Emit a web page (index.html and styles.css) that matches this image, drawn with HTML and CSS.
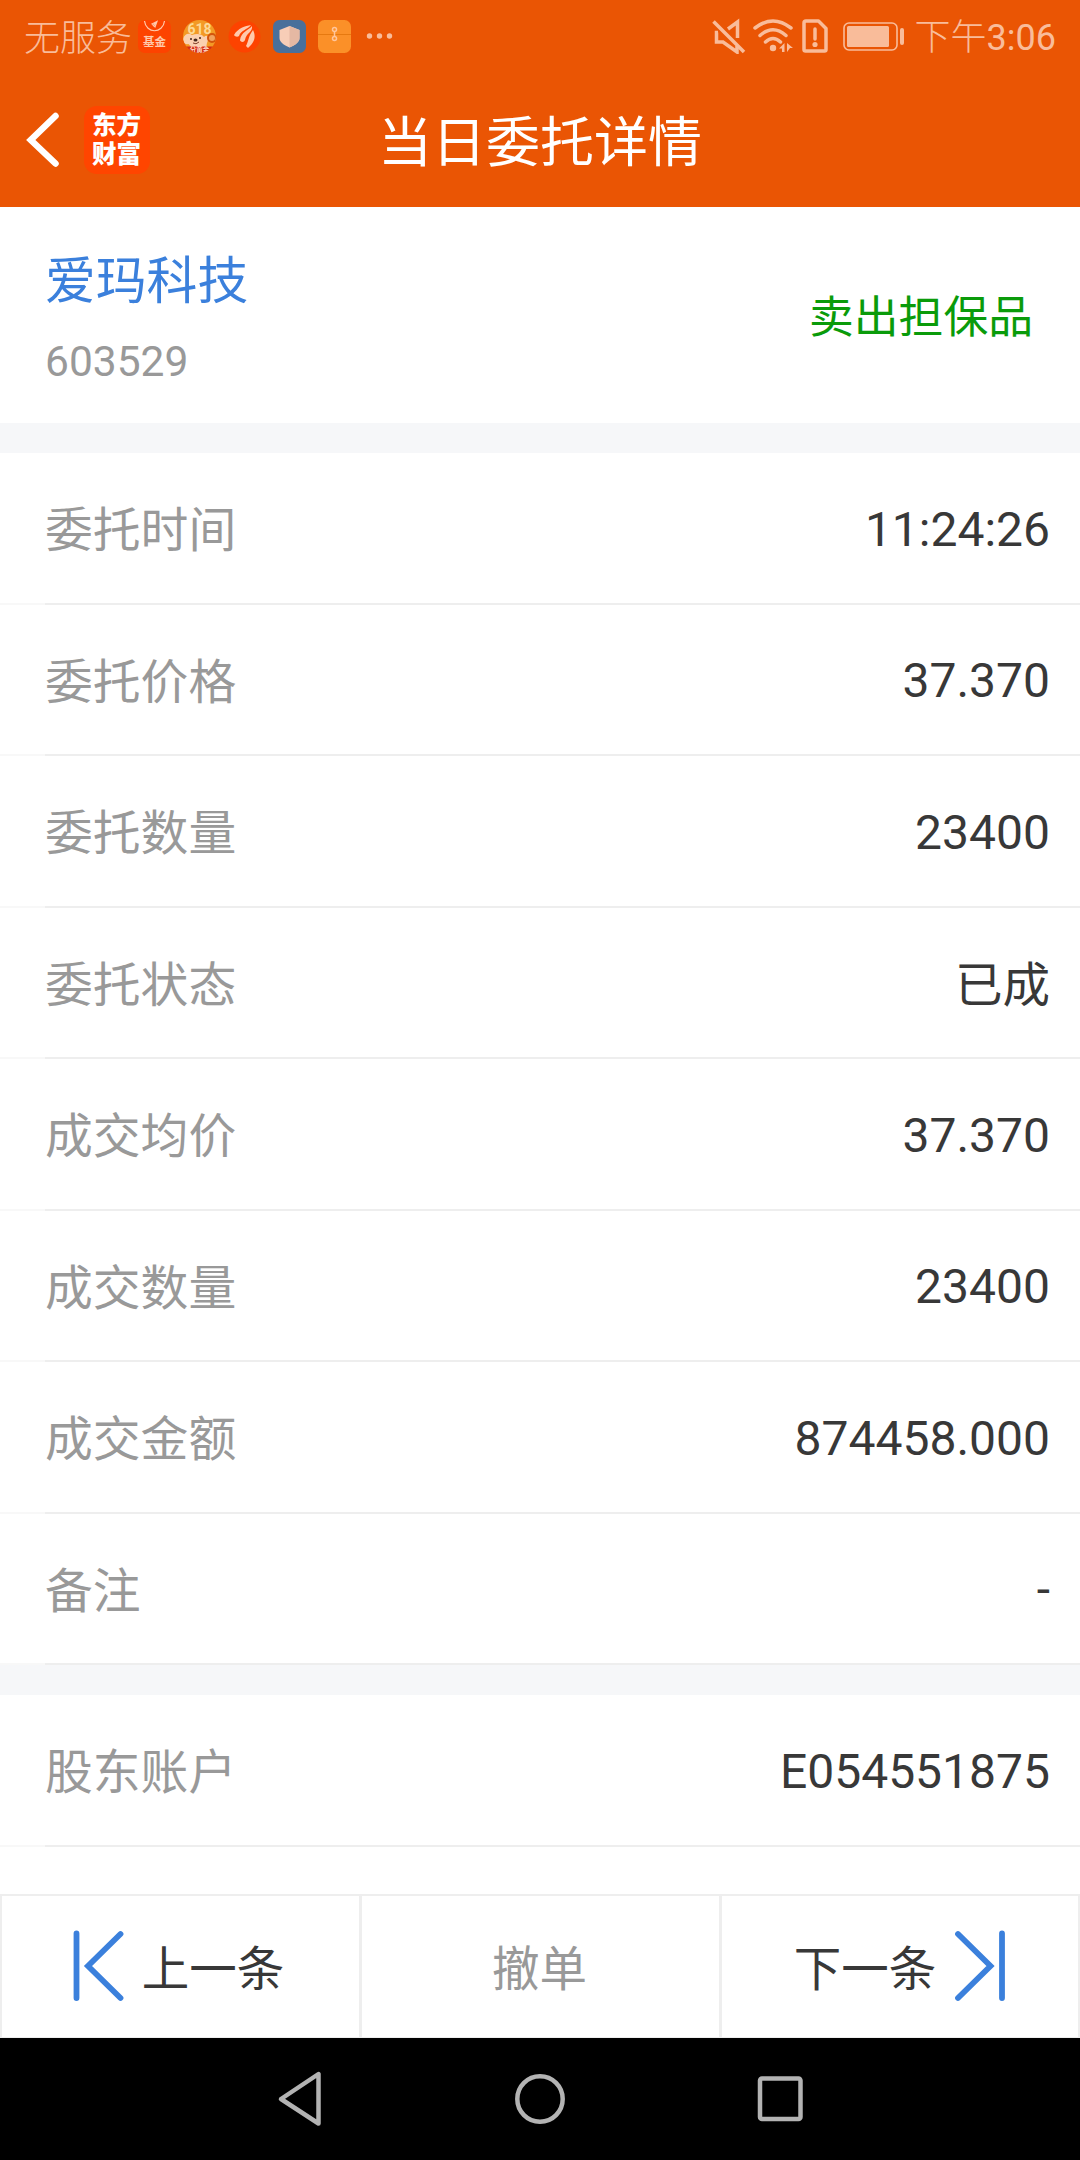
FILE: index.html
```html
<!DOCTYPE html>
<html lang="zh-CN">
<head>
<meta charset="utf-8">
<title>当日委托详情</title>
<link rel="stylesheet" href="styles.css">
</head>
<body>
<div class="screen">
  <header class="header">
    <div class="status">
      <span class="carrier">无服务</span>
      <div class="notices">
        <span class="fund">
          <svg width="33" height="15" viewBox="0 0 33 15" fill="none" stroke="#ffc9ac" stroke-width="1.200"><path d="M6.500 1C8 14 25 14 26.500 1"/><path d="M14 4l5-2.500-2 5.500zM15 6l3-3.500"/></svg>
          <span class="fund-text">基金</span>
        </span>
        <svg class="promo" width="33" height="33" viewBox="0 0 33 33">
          <defs><clipPath id="disc"><circle cx="16.500" cy="16.500" r="16.500"/></clipPath></defs>
          <g clip-path="url(#disc)">
            <rect width="33" height="33" fill="#f39a25"/>
            <text x="16.500" y="13.500" text-anchor="middle" class="promo-number">618</text>
            <path d="M0 19c2-6 6-6 9-4 5-2 10-1 12 2 3-3 6 0 3 6l-1 5H8c-1-3-2-4-3-4-3 1-5-2-5-5z" fill="#fbd0b0"/>
            <circle cx="29" cy="18" r="4" fill="#f2a25c" stroke="#d4540c" stroke-width="2"/>
            <ellipse cx="12.500" cy="20" rx="2" ry="1.500" fill="#45261b"/>
            <circle cx="8" cy="19" r="1" fill="#45261b"/><circle cx="17" cy="18" r="1" fill="#45261b"/>
            <path d="M10 23q3 2 6-1" fill="none" stroke="#82402a"/>
            <rect y="26.500" width="33" height="7" fill="#d52c12"/>
            <text x="16.500" y="32" text-anchor="middle" class="promo-label">分黄金</text>
          </g>
        </svg>
        <svg width="33" height="33" viewBox="0 0 33 33"><circle cx="16.500" cy="16.500" r="16" fill="#fd4300"/><g fill="#ffc9ac"><path d="M6 15C10 8 17 6 23 5C19 10 13 10 11 16C10 17 7 17 6 15z"/><path d="M12 20C13 12 21 10 24 6C25 12 18 13 17 20C16 23 12 22 12 20z"/><path d="M18 26C21 20 20 17 25 10C29 18 25 24 20 28z"/></g></svg>
        <svg width="33" height="33" viewBox="0 0 33 33"><rect width="33" height="33" rx="6.500" fill="#49709b"/><path d="M16.500 6l10 4v8c0 4-4 7-10 9.500C10.500 25 6.500 22 6.500 18v-8z" fill="#f7cdb7"/><path d="M16.500 6l10 4v8c0 4-4 7-10 9.500z" fill="#e5b8a3"/></svg>
        <svg width="33" height="33" viewBox="0 0 33 33"><rect width="33" height="33" rx="6.500" fill="#fb9028"/><path d="M0 14.500h33" stroke="#e67910"/><g fill="none" stroke="#ffc69c" stroke-width="1.500"><circle cx="16.500" cy="9.500" r="2"/><circle cx="16.500" cy="18.500" r="2"/><path d="M16.500 12v4"/></g></svg>
        <svg class="more" width="27" height="33" viewBox="0 0 27 33" fill="#f9bc9a"><circle cx="3.500" cy="16" r="2.700"/><circle cx="13.500" cy="16" r="2.700"/><circle cx="23.500" cy="16" r="2.700"/></svg>
      </div>
      <div class="indicators">
        <svg width="34" height="36" viewBox="0 0 34 36" fill="none" stroke="#f9bc9a" stroke-width="3.500"><path d="M1.500 3.500L32 34"/><path d="M6 14.500H4.500V24H11L25 34V28"/><path d="M16 11l9.500-7V20"/></svg>
        <svg width="40" height="36" viewBox="0 0 40 36" fill="none" stroke="#f9bc9a" stroke-width="3.500" stroke-linecap="round"><path d="M2 10Q20-4 38 10M7 17.500Q20 6 33 17.500M12.500 24Q20 17 27.500 24"/><circle cx="20" cy="30" r="3.200" fill="#f9bc9a" stroke="none"/><path d="M31.500 25v9h-2.500v-3.500H26zM34 25l6 5h-3l-3 4z" fill="#f9bc9a" stroke="none"/></svg>
        <svg width="26" height="36" viewBox="0 0 26 36" fill="none" stroke="#f9bc9a" stroke-width="3.500" stroke-linejoin="round"><path d="M4 3h12.500L24 10.500V31.500Q24 33 22.500 33H3.500Q2 33 2 31.500V5Q2 3 4 3z"/><path d="M13 11v10" stroke-linecap="round"/><circle cx="13" cy="26.500" r="2.600" fill="#f9bc9a" stroke="none"/></svg>
        <svg width="62" height="36" viewBox="0 0 62 36"><rect x="1" y="5" width="53" height="27" rx="5" fill="none" stroke="#f9bc9a" stroke-width="1.600"/><rect x="4" y="8" width="42" height="21" rx="1.500" fill="#f9bc9a"/><rect x="57" y="10" width="4" height="17" rx="2" fill="#f9bc9a"/></svg>
        <span class="time">下午<span class="clock">3:06</span></span>
      </div>
    </div>
    <div class="titlebar">
      <div class="nav">
        <svg width="34" height="58" viewBox="0 0 34 58" fill="none" stroke="#fff" stroke-width="6.500"><path d="M29.500 5L4.800 29L29.500 52.500" stroke-linecap="round"/></svg>
        <span class="logo">东方<br>财富</span>
      </div>
      <h1 class="title">当日委托详情</h1>
    </div>
  </header>

  <section class="stock">
    <div class="stock-id"><span class="name">爱玛科技</span><span class="code">603529</span></div>
    <span class="side">卖出担保品</span>
  </section>

  <main class="details">
    <dl class="group">
      <div class="row"><dt>委托时间</dt><dd>11:24:26</dd></div>
      <div class="row"><dt>委托价格</dt><dd>37.370</dd></div>
      <div class="row"><dt>委托数量</dt><dd>23400</dd></div>
      <div class="row"><dt>委托状态</dt><dd class="cjk">已成</dd></div>
      <div class="row"><dt>成交均价</dt><dd>37.370</dd></div>
      <div class="row"><dt>成交数量</dt><dd>23400</dd></div>
      <div class="row"><dt>成交金额</dt><dd>874458.000</dd></div>
      <div class="row"><dt>备注</dt><dd>-</dd></div>
    </dl>
    <dl class="group">
      <div class="row"><dt>股东账户</dt><dd>E054551875</dd></div>
    </dl>
  </main>

  <footer class="actions">
    <button class="action prev">
      <svg width="52" height="76" viewBox="0 0 52 76" fill="none" stroke="#3b80dc" stroke-width="5.800" stroke-linecap="round"><path d="M4.500 4.500V69M48.500 5L16 37L48.500 69"/></svg>
      <span>上一条</span>
    </button>
    <button class="action cancel"><span>撤单</span></button>
    <button class="action next">
      <span>下一条</span>
      <svg width="52" height="76" viewBox="0 0 52 76" fill="none" stroke="#3b80dc" stroke-width="5.800" stroke-linecap="round"><path d="M48 4.500V69M4 5L36.500 37L4 69"/></svg>
    </button>
  </footer>

  <nav class="system">
    <svg width="60" height="60" viewBox="0 0 60 60" fill="none" stroke="#b3b3b3" stroke-width="4.500" stroke-linejoin="round"><path d="M48.500 5V54.500L11 30z"/></svg>
    <svg width="60" height="60" viewBox="0 0 60 60" fill="none" stroke="#b3b3b3" stroke-width="4.500"><circle cx="30" cy="30" r="22.700"/></svg>
    <svg width="60" height="60" viewBox="0 0 60 60" fill="none" stroke="#b3b3b3" stroke-width="4.500"><rect x="10" y="9.500" width="40.500" height="40.500" rx="2"/></svg>
  </nav>
</div>
</body>
</html>
```
FILE: styles.css
```css
* { box-sizing: border-box; margin: 0; padding: 0; }
body { font-family: Roboto, "Noto Sans CJK SC", sans-serif; background: #fff; color: #383838; }
svg { display: block; flex: none; }
.screen { width: 1080px; height: 2160px; display: flex; flex-direction: column; overflow: hidden; }

.header { height: 207px; flex: none; background: #ea5504; color: #fff; }
.status { height: 72px; display: flex; align-items: center; padding: 0 24px 0 24px; color: #f9bc9a; font-size: 36px; font-weight: 300; }
.carrier { width: 114px; line-height: 72px; padding-top: 5px; white-space: nowrap; }
.notices { display: flex; gap: 12px; align-items: center; }
.more { margin-left: 3px; }
.fund { width: 33px; height: 33px; border-radius: 7px; background: #fd4300; display: flex; flex-direction: column; align-items: center; }
.fund-text { font: 700 11.500px/12px "Noto Sans CJK SC", sans-serif; color: #ffc9ac; }
.promo-number { font: 700 14px Roboto, sans-serif; fill: #fdd995; }
.promo-label { font: 700 6.500px "Noto Sans CJK SC", sans-serif; fill: #ffd7c2; }
.indicators { display: flex; align-items: center; margin-left: auto; }
.indicators svg:nth-child(2) { margin-left: 7px; }
.indicators svg:nth-child(3) { margin-left: 9px; }
.indicators svg:nth-child(4) { margin-left: 15px; }
.time { margin-left: 10px; line-height: 72px; padding-top: 4px; white-space: nowrap; }
.clock { font-weight: 400; }
.titlebar { height: 135px; display: grid; grid-template-columns: 1fr auto 1fr; align-items: center; }
.nav { display: flex; align-items: center; padding-left: 26px; gap: 24px; }
.logo { width: 66px; height: 68px; padding: 3px 0 0 8px; border-radius: 13px; background: #ff4500; font: 900 24.500px/29px "Noto Sans CJK SC", sans-serif; }
.title { padding-top: 9px; font-size: 54px; font-weight: 400; line-height: 72px; }

.stock { height: 216px; flex: none; display: flex; justify-content: space-between; align-items: center; padding: 0 47px 0 45px; }
.stock-id { display: flex; flex-direction: column; padding-top: 17px; }
.name { font-size: 50.800px; line-height: 76px; color: #3b80dc; }
.code { font-size: 42.500px; line-height: 84px; color: #999; }
.side { padding-top: 5px; font-size: 44.800px; line-height: 60px; color: #0a9b0a; }

.details { flex: 1; min-height: 0; }
.group { border-top: 30px solid #f6f7f9; }
.row { height: 151.500px; display: flex; align-items: center; justify-content: space-between; padding: 0 30px 0 45px; background: linear-gradient(90deg, #f8f8f8 45px, #eee 45px) 0 100% / 100% 2px no-repeat; }
.row dt { padding-top: 5px; font-size: 47.800px; line-height: 72px; color: #999; }
.row dd { padding-top: 2px; font-size: 48px; line-height: 72px; }
.row .cjk { padding-top: 5px; font-size: 47.500px; }

.actions { height: 144px; flex: none; display: grid; grid-template-columns: 357px 360px 1fr; border: 2px solid #eee; border-bottom-width: 1px; }
.action { border: 0; background: #fff; font: 400 47.500px/72px Roboto, "Noto Sans CJK SC", sans-serif; color: #383838; display: flex; align-items: center; justify-content: center; gap: 18px; }
.action span { padding-top: 6px; }
.action + .action { border-left: 3px solid #eee; }
.prev { padding-right: 5px; }
.action.cancel { color: #999; padding-right: 2px; }

.system { height: 122px; flex: none; background: #000; display: flex; justify-content: center; align-items: center; gap: 180px; }
```
